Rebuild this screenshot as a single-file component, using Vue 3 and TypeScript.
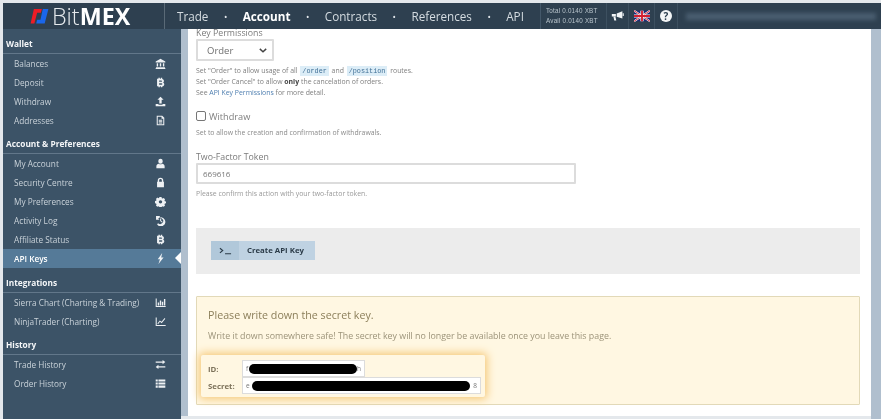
<script setup lang="ts">
interface NavItem { label: string; icon: string; active?: boolean }
interface NavGroup { title: string; items: NavItem[] }

const icons: Record<string, string> = {
  bank: 'M8 1l7 4v1.500H1V5zM2.500 7.500h2v5h-2zM7 7.500h2v5H7zM11.500 7.500h2v5h-2zM1.500 13h13v1h-13zM1 14.500h14V16H1z',
  btc: 'M5 1h2v1.500h1.500V1h2v1.800c1.600.4 2.500 1.500 2.500 2.900 0 1-.5 1.800-1.300 2.200 1 .4 1.800 1.300 1.800 2.600 0 1.800-1.200 3-3 3.200V15h-2v-1.500H7V15H5v-1.500H3v-11h2zM6 5v2h3c.8 0 1.200-.4 1.200-1s-.4-1-1.200-1zM6 9v2.200h3.400c.9 0 1.300-.5 1.300-1.100S10.300 9 9.400 9z',
  upload: 'M8 1l4.500 4.500H9.700V11H6.300V5.500H3.500zM1 11.500h4v1.200h6v-1.200h4V15H1z',
  file: 'M2.500 1h8l3 3v11h-11zM4 2.500v11h8v-8H9.500v-3zM5.500 7h5v1.200h-5zM5.500 9.200h5v1.200h-5zM5.500 11.200h5v1.200h-5z',
  user: 'M8 1a3.200 3.200 0 0 1 3.200 3.200v1a3.200 3.200 0 0 1-6.400 0v-1A3.200 3.200 0 0 1 8 1zM2 15v-3c0-2 1.800-3 3.500-3.500 1.500 1 3.500 1 5 0 1.700.5 3.500 1.500 3.500 3.500v3z',
  lock: 'M4 7V5a4 4 0 0 1 8 0v2h1v8H3V7zm2 0h4V5a2 2 0 0 0-4 0z',
  cog: 'M6.500 1.500h3l.4 1.600 1.300.6 1.400-.8 2 2-.8 1.400.6 1.300 1.600.4v2.600l-1.600.4-.6 1.300.8 1.400-2 2-1.400-.8-1.300.6-.4 1.600h-3l-.4-1.600-1.300-.6-1.400.8-2-2 .8-1.400-.6-1.300-1.600-.4V7.400l1.600-.4.6-1.300-.8-1.400 2-2 1.400.8 1.300-.6zM8 6a2.500 2.500 0 1 0 0 5 2.500 2.500 0 0 0 0-5z',
  history: 'M1.500 1.500h6L6 3.800A6.500 6.500 0 1 1 3 13.500L4.500 12a4.400 4.400 0 1 0 0-6.500l2 1.500h-5zM7.500 5H9v3.200l2 1.500-.9 1.100-2.600-2z',
  bolt: 'M10.500 0L4 9h3.200L5 16l7.500-9.500H9z',
  bars: 'M1 2h1.500v11h13v1.500H1zM4 8h2v4.500H4zM7 5h2v7.500H7zM10 7h2v5.500h-2zM13 3h2v9.500h-2z',
  line: 'M1 2h1.500v11h13v1.500H1zM3.500 11L7 6.500l2.500 2L14 3l1 1-5.300 6.500-2.500-2L4.500 12z',
  swap: 'M1 3.500h10v-2l4 3-4 3v-2H1zM15 10.500H5v-2l-4 3 4 3v-2h10z',
  list: 'M1 2h3v3H1zM5 2h10v3H5zM1 6.500h3v3H1zM5 6.500h10v3H5zM1 11h3v3H1zM5 11h10v3H5z',
}

const groups: NavGroup[] = [
  { title: 'Wallet', items: [
    { label: 'Balances', icon: 'bank' },
    { label: 'Deposit', icon: 'btc' },
    { label: 'Withdraw', icon: 'upload' },
    { label: 'Addresses', icon: 'file' },
  ] },
  { title: 'Account & Preferences', items: [
    { label: 'My Account', icon: 'user' },
    { label: 'Security Centre', icon: 'lock' },
    { label: 'My Preferences', icon: 'cog' },
    { label: 'Activity Log', icon: 'history' },
    { label: 'Affiliate Status', icon: 'btc' },
    { label: 'API Keys', icon: 'bolt', active: true },
  ] },
  { title: 'Integrations', items: [
    { label: 'Sierra Chart (Charting & Trading)', icon: 'bars' },
    { label: 'NinjaTrader (Charting)', icon: 'line' },
  ] },
  { title: 'History', items: [
    { label: 'Trade History', icon: 'swap' },
    { label: 'Order History', icon: 'list' },
  ] },
]

const topNav = ['Trade', 'Account', 'Contracts', 'References', 'API']
</script>

<template>
  <div class="page">
    <header class="topbar">
      <div class="brand">
        <svg class="mark" viewBox="0 0 20 16" width="19" height="15">
          <path d="M4 0H12.500L11.500 4H7.500L4.500 15.500H0.500z" fill="#ee1c25" />
          <path d="M13.500 0H19.500L15.500 15.500H6.500L7.500 11.500H11z" fill="#1a66ea" />
        </svg>
        <span class="word">Bit<b>MEX</b></span>
      </div>
      <nav class="topnav">
        <template v-for="(n, i) in topNav" :key="n">
          <span v-if="i > 0" class="dot">•</span>
          <a :class="{ cur: n === 'Account' }">{{ n }}</a>
        </template>
      </nav>
      <div class="balance">
        <div><span>Total</span> 0.0140 XBT</div>
        <div><span>Avail</span> 0.0140 XBT</div>
      </div>
      <div class="tool t1">
        <svg viewBox="0 0 16 14" width="13" height="12">
          <path d="M14 1v9L7 8V4zM1 4.500h5v3H1zM3 8h2.500l1 4.500H4zM14.500 3.500h1.200V7h-1.200z" fill="#f1f4f6" />
        </svg>
      </div>
      <div class="tool t2">
        <svg viewBox="0 0 60 40" width="16" height="12">
          <rect width="60" height="40" fill="#1a2a78" />
          <path d="M0 0L60 40M60 0L0 40" stroke="#fff" stroke-width="7" />
          <path d="M0 0L60 40M60 0L0 40" stroke="#d21f30" stroke-width="3.500" />
          <path d="M30 0V40M0 20H60" stroke="#fff" stroke-width="12" />
          <path d="M30 0V40M0 20H60" stroke="#d21f30" stroke-width="7" />
        </svg>
      </div>
      <div class="tool t3">
        <span class="help">?</span>
      </div>
      <div class="account"><span class="smear"></span></div>
    </header>

    <div class="body">
      <aside class="side">
        <section v-for="g in groups" :key="g.title" class="group">
          <h4>{{ g.title }}</h4>
          <a v-for="it in g.items" :key="it.label" class="row" :class="{ on: it.active }">
            <span>{{ it.label }}</span>
            <svg viewBox="0 0 16 16" width="11" height="11">
              <path :d="icons[it.icon]" fill="currentColor" fill-rule="evenodd" />
            </svg>
            <i v-if="it.active" class="caret"></i>
          </a>
        </section>
      </aside>

      <main class="sheet">
        <div class="inner">
          <label class="lab first">Key Permissions</label>
          <div class="select">Order
            <svg viewBox="0 0 10 6" width="8" height="5"><path d="M1 1l4 3.500L9 1" fill="none" stroke="#444" stroke-width="1.800" /></svg>
          </div>
          <p class="hint tight">Set "Order" to allow usage of all <code>/order</code> and <code>/position</code> routes.</p>
          <p class="hint tight">Set "Order Cancel" to allow <b>only</b> the cancelation of orders.</p>
          <p class="hint tight">See <a>API Key Permissions</a> for more detail.</p>

          <div class="check"><span class="box"></span>Withdraw</div>
          <p class="hint">Set to allow the creation and confirmation of withdrawals.</p>

          <label class="lab token">Two-Factor Token</label>
          <div class="input">669616</div>
          <p class="hint">Please confirm this action with your two-factor token.</p>

          <div class="band">
            <div class="btn">
              <span class="btn-ico">
                <svg viewBox="0 0 14 8" width="13" height="8"><path d="M1 1l3 2.500L1 6M6.500 7H13" fill="none" stroke="#2b3b48" stroke-width="1.200" /></svg>
              </span>
              <span class="btn-txt">Create API Key</span>
            </div>
          </div>

          <div class="alert">
            <h3>Please write down the secret key.</h3>
            <p>Write it down somewhere safe! The secret key will no longer be available once you leave this page.</p>
            <div class="keys">
              <div class="kv">
                <b>ID:</b>
                <div class="kf short">f<span class="ink i1"></span>h</div>
              </div>
              <div class="kv">
                <b>Secret:</b>
                <div class="kf long">e<span class="ink i2"></span>8</div>
              </div>
            </div>
          </div>
        </div>
      </main>
      <div class="rail"></div>
    </div>
  </div>
</template>

<style>
html, body { margin: 0; background: #e4e8ec; }
</style>

<style scoped>
* { box-sizing: border-box; }
.page {
  width: 881px; height: 419px; overflow: hidden;
  display: flex; flex-direction: column;
  padding: 3px 0 0 3px;
  background: #e4e8ec;
  font-family: "Open Sans", "Noto Sans", sans-serif;
  filter: blur(0.7px);
}
.topbar {
  height: 26px; flex: none; display: flex; align-items: center;
  background: #2e4050; color: #fff;
}
.brand {
  width: 162px; height: 100%; display: flex; align-items: center;
  padding-left: 27px; gap: 3px; flex: none;
  border-right: 1px solid #5a6a77;
}
.mark { flex: none; }
.word { font-size: 23.300px; line-height: 26px; font-weight: 300; color: #e6eaed; }
.word b { font-weight: 700; color: #fff; }
.topnav { display: flex; align-items: center; width: 375px; padding-left: 12px; flex: none; }
.topnav a { font-size: 11.700px; color: #d5dce1; }
.topnav a.cur { font-weight: 700; color: #fff; }
.dot { width: 34.300px; text-align: center; font-size: 9px; color: #e5eaee; }
.balance {
  width: 66px; flex: none; font-size: 6.300px; line-height: 10px; color: #b9c4cc;
  font-family: "Liberation Sans", sans-serif; letter-spacing: 0.2px;
  padding-left: 5px; height: 100%; padding-top: 3px;
  border-left: 1px solid #44586a; white-space: nowrap;
}
.tool {
  height: 100%; flex: none; display: flex; align-items: center; justify-content: center;
  border-left: 1px solid #3d5060;
}
.t1 { width: 22px; }
.t2 { width: 26px; }
.t3 { width: 23px; }
.help {
  width: 12px; height: 12px; border-radius: 50%; background: #f3f5f6; color: #2e4050;
  font: 700 10px/12px "Open Sans", sans-serif; text-align: center;
}
.account { flex: 1; height: 100%; border-left: 1px solid #3d5060; display: flex; align-items: center; padding: 0 8px; }
.smear { display: block; width: 190px; height: 7px; background: #4a5e70; filter: blur(2px); }

.body { flex: 1; display: flex; min-height: 0; background: #e4e8ec; }
.side {
  width: 178px; flex: none; background: #3c5367; color: #c9d2d9;
  padding-top: 8px;
}
.group { margin-bottom: 7.300px; }
.group h4 {
  margin: 0; height: 17px; padding-left: 3px; line-height: 13px;
  font-size: 8.300px; font-weight: 700; color: #f4f6f8;
  border-bottom: 1px solid #62778a;
}
.row {
  position: relative; height: 19px; display: flex; align-items: center; justify-content: space-between;
  padding: 0 15px 0 11px; font-size: 8.250px;
}
.row svg { color: #eef1f4; flex: none; }
.row.on { background: #557a98; color: #fff; font-weight: 600; }
.caret {
  position: absolute; right: 0; top: 3px; width: 0; height: 0;
  border: 6.500px solid transparent; border-right-color: #fff; border-left-width: 0;
}

.sheet {
  width: 683px; margin: 0 0 3px 7px; flex: none; background: #fff; overflow: hidden;
  box-shadow: -7px 0 0 #b0bfce;
}
.rail { flex: 1; background: #b0bfce; }
.inner { padding: 0 11px 0 8px; margin-top: -2px; color: #7d7d7d; }
.lab { display: block; font-size: 8.800px; line-height: 12px; color: #7b7b7b; }
.select {
  width: 78px; height: 22px; display: flex; align-items: center; justify-content: space-between;
  padding: 0 5px 0 9px; font-size: 9.500px; color: #6e6e6e;
  border: 2px solid #dcdcdc; border-radius: 1px; background: #fff;
}
.hint { margin: 0; font-size: 6.900px; line-height: 11px; color: #8a8a8a; }
.hint.tight { color: #7f7f7f; }
.select + .hint { margin-top: 4px; }
.hint a { color: #4f7fb0; }
.hint b { color: #444; }
code {
  font: 6.800px "Liberation Mono", monospace; background: #dcedf7; color: #3f6f96;
  padding: 1px 2px; margin: 0 1px;
}
.check { display: flex; align-items: center; gap: 3px; margin-top: 11px; height: 14px; font-size: 9.200px; color: #7f7f7f; }
.box { width: 10px; height: 10px; border: 1px solid #767676; border-radius: 2px; background: #fff; }
.check + .hint { margin-top: 4px; }
.token { margin-top: 13px; }
.input {
  width: 380px; height: 21px; border: 2px solid #dcdcdc; border-radius: 1px;
  padding-left: 5px; font-size: 8px; line-height: 17px; color: #777;
}
.input + .hint { margin-top: 4px; color: #999; }
.band { margin-top: 29px; height: 46px; background: #ececec; padding: 13px 0 0 15px; }
.btn { display: flex; width: 104px; height: 19px; background: #bfd2e2; color: #2b3b48; }
.btn-ico { width: 28px; display: flex; align-items: center; justify-content: center; background: #b1c8da; }
.btn-txt { flex: 1; padding-left: 8px; font-size: 7.800px; font-weight: 700; line-height: 19px; white-space: nowrap; }
.alert {
  margin-top: 22px; height: 109px; background: #fff7e2; border: 1px solid #e2d9b8; border-radius: 1px;
  padding: 11px 0 0 11px; color: #8f8467;
}
.alert h3 { margin: 0; font-size: 10.700px; line-height: 14px; font-weight: 500; color: #8c7f5a; }
.alert p { margin: 8px 0 0; font-size: 8.860px; line-height: 12px; color: #9c9379; white-space: nowrap; }
.keys {
  width: 284px; height: 42px; margin: 13px 0 0 -7px; padding: 5px 4px 0 7px;
  background: #fff7e2; border-radius: 2px;
  box-shadow: 0 0 8px 2px #f5c877;
}
.kv { display: flex; align-items: center; height: 17px; }
.kv b { width: 34px; flex: none; font-size: 7.800px; color: #7d725a; }
.kf {
  height: 17px; display: flex; align-items: center; justify-content: space-between;
  background: #fff; border: 1px solid #dcdcdc; padding: 0 3px;
  font-size: 6.500px; color: #777;
}
.short { width: 123px; }
.long { width: 239px; }
.ink { display: block; height: 10px; background: #000; border-radius: 5px; }
.i1 { width: 108px; }
.i2 { width: 218px; }
</style>
